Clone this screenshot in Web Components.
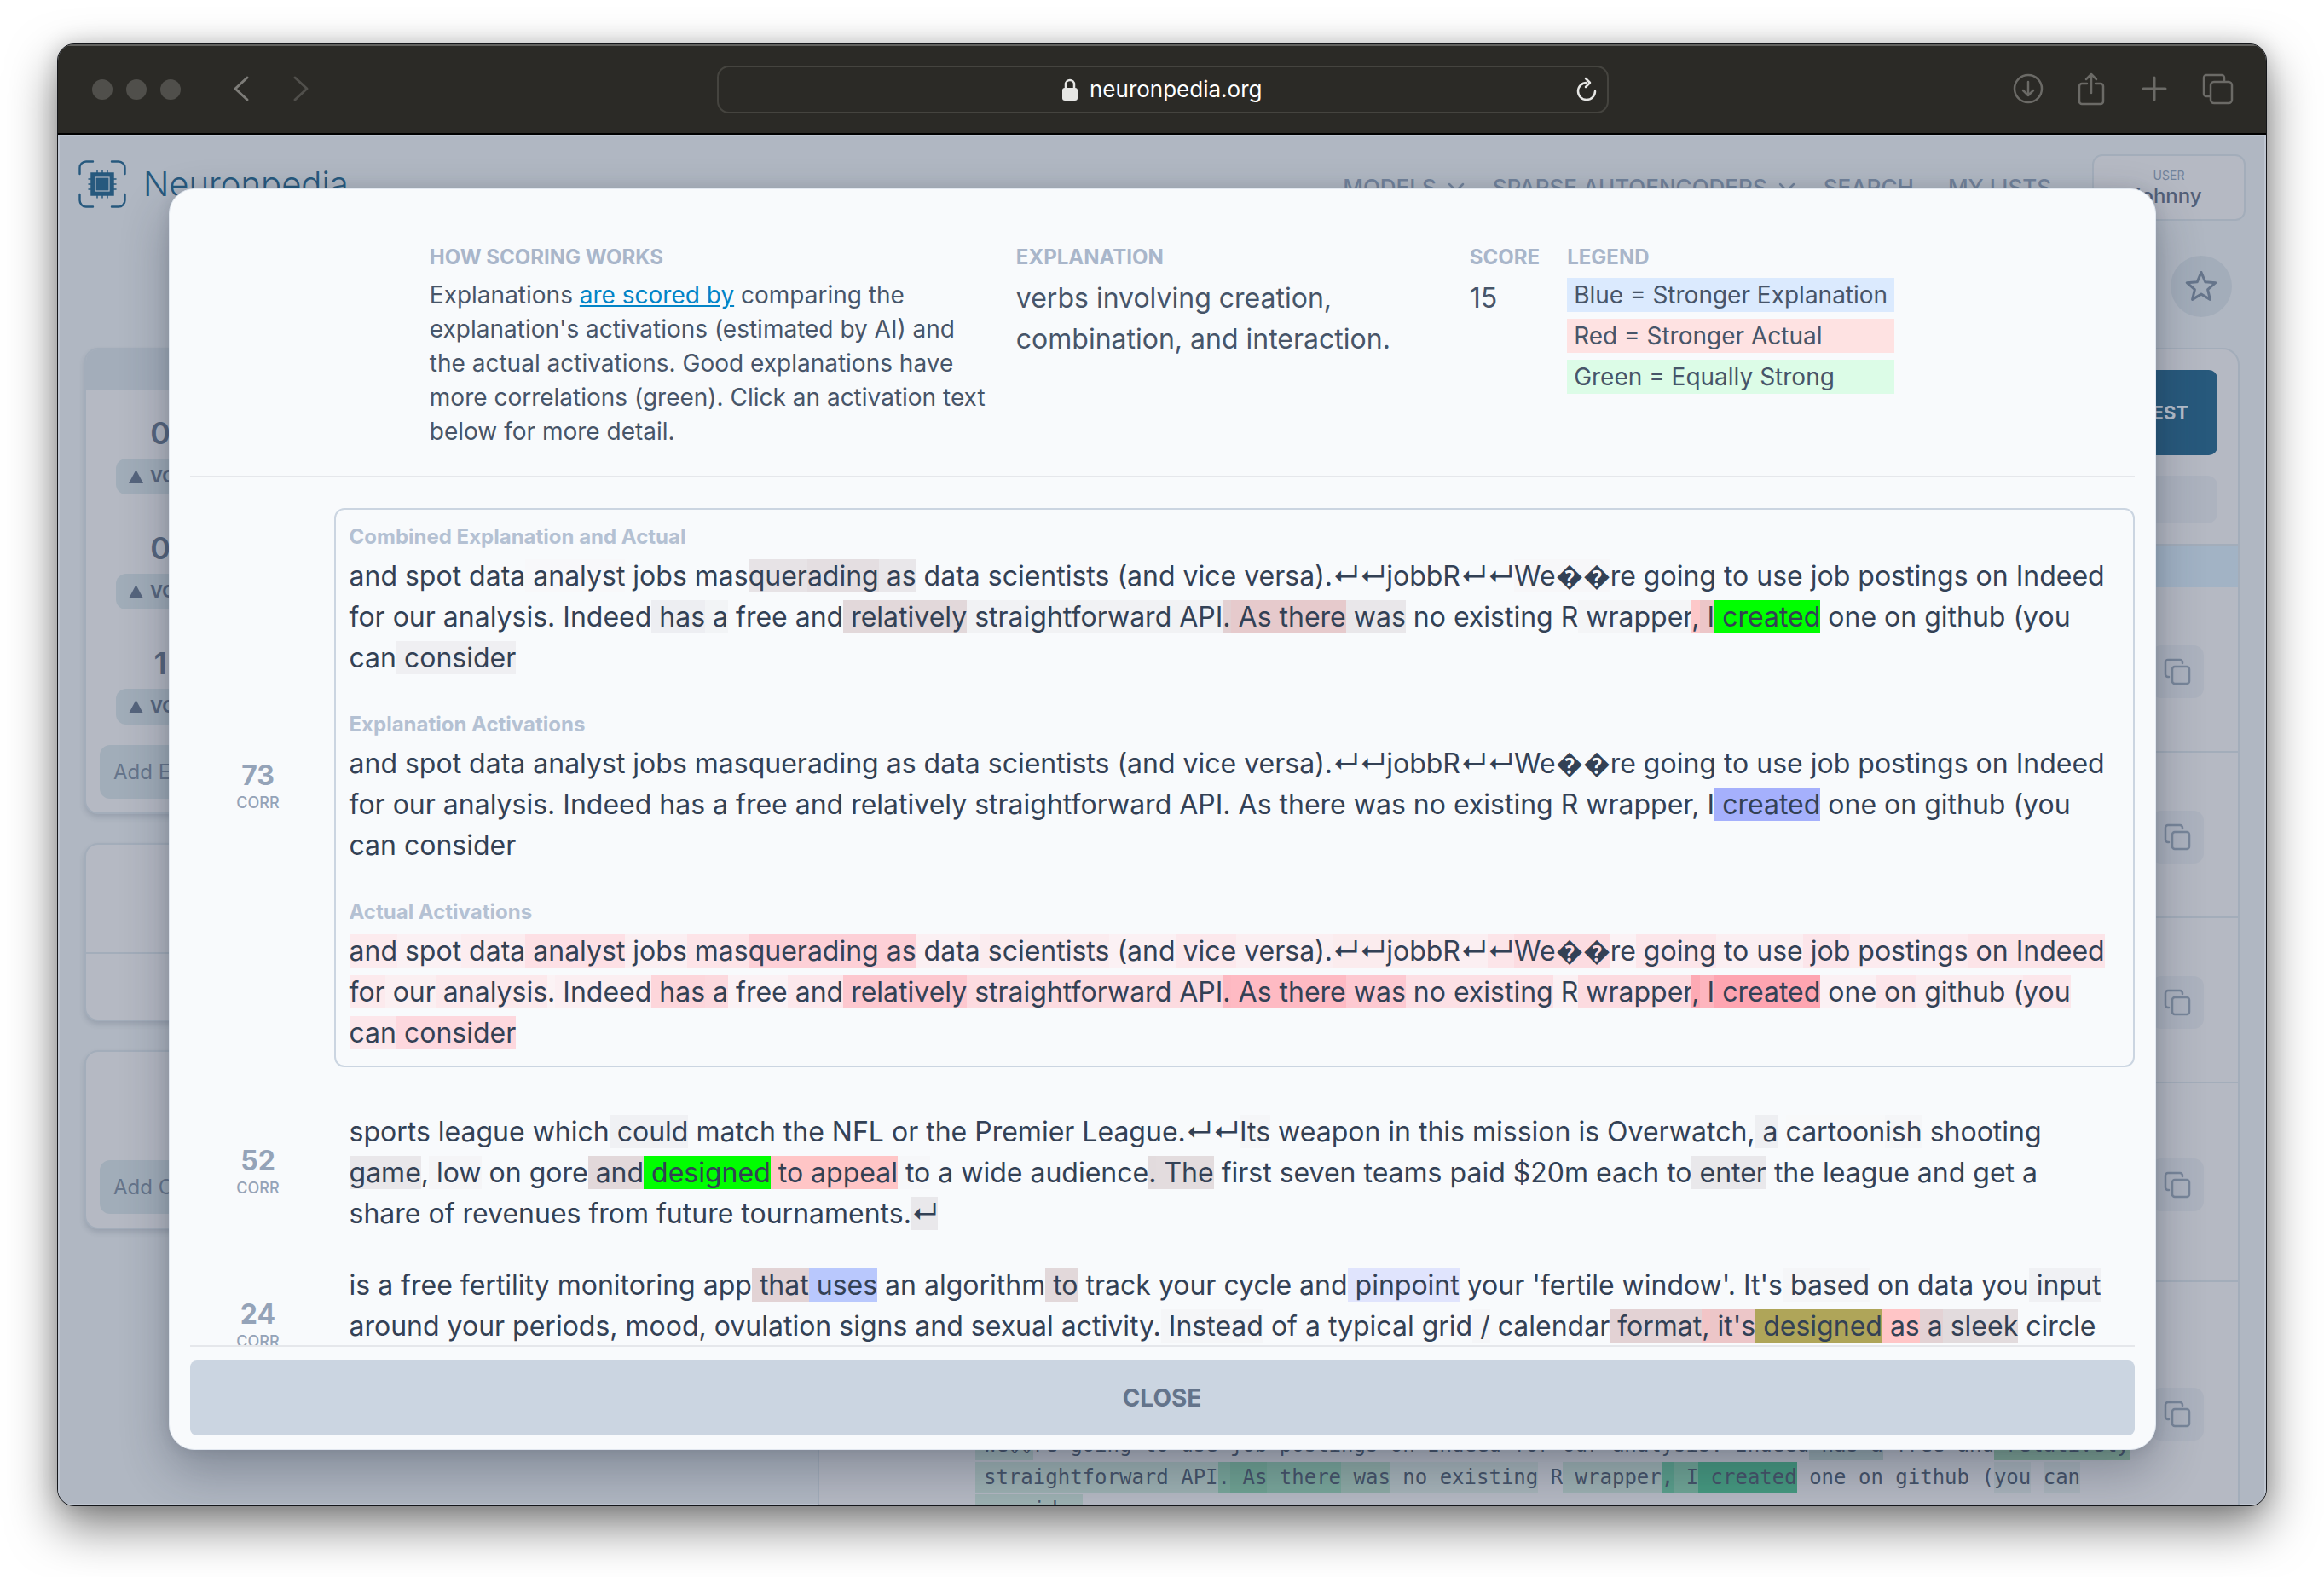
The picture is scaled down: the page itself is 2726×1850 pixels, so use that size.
<!DOCTYPE html>
<html lang="en">
<head>
<meta charset="utf-8">
<title>Neuronpedia</title>
<style>
  html, body { margin: 0; height: 100%; }
  body {
    box-sizing: border-box;
    display: flex;
    padding: 51px 67px 83px;
    background: #fff;
    overflow: hidden;
    font-family: Inter, "Liberation Sans", sans-serif;
    color: #334155;
  }
</style>
</head>
<body>
<browser-window>
  <browser-toolbar slot="toolbar"></browser-toolbar>
  <neuron-page></neuron-page>
  <score-dialog slot="overlay"></score-dialog>
</browser-window>

<script>
const base = `:host, *, *::before, *::after { box-sizing: border-box; } button, input, select { font: inherit; color: inherit; margin: 0; } svg { display: block; flex: none; }`;

function define(name, html, setup) {
  customElements.define(name, class extends HTMLElement {
    connectedCallback() {
      if (this.shadowRoot) return;
      const template = document.createElement('template');
      template.innerHTML = html;
      const root = this.attachShadow({ mode: 'open' });
      root.append(template.content.cloneNode(true));
      if (setup) setup(this, root);
    }
  });
}

define('browser-window', `
<style>${base}
  :host { flex: 1; min-width: 0; display: flex; flex-direction: column; position: relative; border-radius: 20px; overflow: hidden; border: 1px solid #14161a; box-shadow: 0 24px 56px rgba(0,0,0,.5), 0 0 24px rgba(0,0,0,.16); background: #b0b7c2; }
  main { flex: 1; min-height: 0; position: relative; overflow: hidden; box-shadow: inset 0 0 0 2px #bec5d0; }
  .overlay { position: absolute; inset: 0; display: flex; justify-content: center; padding: 63px 0 65px; }
</style>
<slot name="toolbar"></slot>
<main><slot></slot><div class="overlay"><slot name="overlay"></slot></div></main>`);

define('browser-toolbar', `
<style>${base}
  :host { height: 106px; flex: none; display: grid; grid-template-columns: 1fr minmax(0, 1046px) 1fr; align-items: center; padding: 0 38px 0 40px; background: #2b2a26; border-top: 2px solid #62625f; border-bottom: 2px solid #000; color: #6b6a66; }
  .left, .right { display: flex; align-items: center; }
  .lights { display: flex; gap: 16px; margin-right: 56px; }
  .lights i { width: 24px; height: 24px; border-radius: 50%; background: #504f4b; }
  .right { justify-content: flex-end; gap: 36px; }
  button { display: block; padding: 0; border: 0; background: none; }
  .back { margin-right: 40px; color: #7d7c78; }
  .url { height: 56px; border: 2px solid #45443f; border-radius: 14px; display: grid; grid-template-columns: 1fr auto 1fr; align-items: center; padding: 0 10px; color: #fff; }
  label { grid-column: 2; display: flex; align-items: center; gap: 14px; }
  input { width: 204px; padding: 0; border: 0; outline: 0; background: none; font-size: 26px; line-height: 32px; color: #fff; }
  .reload { justify-self: end; }
</style>
<div class="left">
  <div class="lights"><i></i><i></i><i></i></div>
  <button class="back" aria-label="Back"><svg width="30" height="36" viewBox="0 0 30 36" fill="none" stroke="currentColor" stroke-width="3" stroke-linecap="round" stroke-linejoin="round"><path d="M22 4 8 17l14 13"/></svg></button>
  <button aria-label="Forward"><svg width="30" height="36" viewBox="0 0 30 36" fill="none" stroke="#504f4b" stroke-width="3" stroke-linecap="round" stroke-linejoin="round"><path d="M8 4l14 13L8 30"/></svg></button>
</div>
<div class="url">
  <label><svg width="18" height="26" viewBox="0 0 18 26"><rect y="11" width="18" height="15" rx="3" fill="#e6e6e4"/><path d="M4 12V7a5 5 0 0 1 10 0v5" fill="none" stroke="#e6e6e4" stroke-width="2.5"/></svg><input type="text" aria-label="Address" value="neuronpedia.org"></label>
  <button class="reload" aria-label="Reload"><svg width="28" height="30" viewBox="0 0 28 30" fill="none" stroke="#e6e6e4" stroke-width="2.5" stroke-linecap="round" stroke-linejoin="round"><path d="M14 7a10 10 0 1 0 10 10"/><path d="M13 2l5 5-5 5"/></svg></button>
</div>
<div class="right">
  <button aria-label="Downloads"><svg width="38" height="40" viewBox="0 0 38 40" fill="none" stroke="currentColor" stroke-width="2.5" stroke-linecap="round" stroke-linejoin="round"><circle cx="19" cy="19" r="16"/><path d="M19 11v16M13 21l6 6 6-6"/></svg></button>
  <button aria-label="Share"><svg width="38" height="40" viewBox="0 0 38 40" fill="none" stroke="currentColor" stroke-width="2.5" stroke-linecap="round" stroke-linejoin="round"><path d="M14 13H8a3 3 0 0 0-3 3v18a3 3 0 0 0 3 3h22a3 3 0 0 0 3-3V16a3 3 0 0 0-3-3h-6M19 24V2M13 8l6-6 6 6"/></svg></button>
  <button aria-label="New tab"><svg width="38" height="40" viewBox="0 0 38 40" fill="none" stroke="currentColor" stroke-width="3" stroke-linecap="round"><path d="M19 6v26M6 19h26"/></svg></button>
  <button aria-label="Tabs"><svg width="38" height="40" viewBox="0 0 38 40" fill="none" stroke="currentColor" stroke-width="2.5" stroke-linejoin="round"><rect x="11" y="11" width="25" height="25" rx="4"/><path d="M11 28H6a3 3 0 0 1-3-3V6a3 3 0 0 1 3-3h18a3 3 0 0 1 3 3v5"/></svg></button>
</div>`);

define('site-header', `
<style>${base}
  :host { display: flex; align-items: center; justify-content: space-between; padding: 23px 24px 0; height: 100px; }
  a { color: inherit; text-decoration: none; }
  .brand { display: flex; align-items: center; gap: 20px; height: 70px; align-self: flex-start; font-size: 40px; line-height: 48px; font-weight: 300; color: #27597e; }
  nav { display: flex; align-items: center; gap: 40px; font-size: 26px; line-height: 32px; font-weight: 500; color: #71829a; }
  nav a, nav button { display: flex; align-items: center; gap: 12px; padding: 0; border: 0; background: none; }
  nav button { margin-right: -8px; }
  .user { width: 180px; height: 78px; margin-left: 8px; border: 2px solid #a3adba; border-radius: 12px; background: #b5b9c3; display: flex; flex-direction: column; align-items: center; justify-content: center; gap: 0; }
  .user small { font-size: 14px; line-height: 20px; font-weight: 400; color: #71829a; }
  .user span { font-size: 24px; line-height: 28px; font-weight: 500; color: #526079; }
</style>
<a class="brand" href="#"><svg width="56" height="56" viewBox="0 0 56 56" fill="none" stroke="#27597e" stroke-width="2.4" stroke-linecap="round"><path d="M1.500 16V9a7.500 7.500 0 0 1 7.500-7.500h8M39 1.500h8A7.500 7.500 0 0 1 54.500 9v7M54.500 40v7a7.500 7.500 0 0 1-7.500 7.500h-8M17 54.500H9A7.500 7.500 0 0 1 1.500 47v-7"/><rect x="15" y="15" width="26" height="26" fill="#27597e" stroke-width="1.500"/><rect x="20" y="20" width="16" height="16" stroke="#b0b7c2" stroke-width="1.200"/><path stroke-width="1.500" d="M22 12v3M28 12v3M34 12v3M22 41v3M28 41v3M34 41v3M12 22h3M12 28h3M12 34h3M41 22h3M41 28h3M41 34h3"/></svg>Neuronpedia</a>
<nav>
  <button>MODELS <svg width="22" height="14" viewBox="0 0 22 14" fill="none" stroke="currentColor" stroke-width="2.500" stroke-linecap="round"><path d="M3 3l8 8 8-8"/></svg></button>
  <button>SPARSE AUTOENCODERS <svg width="22" height="14" viewBox="0 0 22 14" fill="none" stroke="currentColor" stroke-width="2.500" stroke-linecap="round"><path d="M3 3l8 8 8-8"/></svg></button>
  <a href="#">SEARCH</a>
  <a href="#">MY LISTS</a>
  <a class="user" href="#"><small>USER</small><span>johnny</span></a>
</nav>`);

define('vote-item', `
<style>${base}
  :host { display: flex; flex-direction: column; gap: 8px; width: 104px; align-items: center; }
  b { font-size: 36px; line-height: 44px; font-weight: 600; color: #56657d; }
  button { width: 104px; height: 42px; border: 0; border-radius: 12px; background: #a1adb9; color: #56657d; font-size: 20px; line-height: 24px; font-weight: 700; display: flex; align-items: center; gap: 8px; padding: 0 0 0 15px; }
</style>
<b><slot></slot></b>
<button><svg width="17" height="16" viewBox="0 0 17 16"><path d="M8.500 0 17 16H0z" fill="currentColor"/></svg>VOTE</button>`);

define('side-card', `
<style>${base}
  :host { display: block; border: 2px solid #a3adba; border-radius: 16px; background: #b5b9c3; box-shadow: 0 4px 6px rgba(40,55,75,.16); overflow: hidden; }
</style><slot></slot>`);

define('copy-button', `
<style>${base}
  :host { display: block; }
  button { width: 62px; height: 62px; border: 0; border-radius: 12px; background: #adb3bf; color: #78869a; display: grid; place-items: center; padding: 0; }
</style>
<button aria-label="Copy"><svg width="32" height="32" viewBox="0 0 32 32" fill="none" stroke="currentColor" stroke-width="2.500" stroke-linecap="round" stroke-linejoin="round"><rect x="10" y="10" width="20" height="20" rx="3"/><path d="M6 22H5a3 3 0 0 1-3-3V5a3 3 0 0 1 3-3h14a3 3 0 0 1 3 3v1"/></svg></button>`);

define('neuron-page', `
<style>${base}
  :host { display: block; }
  .tools { display: flex; justify-content: flex-end; padding: 42px 40px 36px; }
  .star { width: 72px; height: 72px; border: 0; border-radius: 50%; background: #a3adba; display: grid; place-items: center; padding: 0; }
  .cols { display: grid; grid-template-columns: 1fr 2fr; gap: 26px; padding: 0 31px; align-items: start; }
  .side { display: flex; flex-direction: column; gap: 34px; }
  .bar { height: 48px; background: #a3adba; }
  .votes { display: flex; flex-direction: column; gap: 41px; padding: 28px 0 24px 35px; }
  .add { display: flex; height: 63px; margin: 0 16px 16px; border: 0; border-radius: 12px; background: #a1adb9; color: #66758b; font-size: 24px; line-height: 32px; align-items: center; padding: 0 16px; width: calc(100% - 32px); }
  .blank { height: 128px; border-bottom: 2px solid #a3adba; }
  .blank + .blank { height: 77px; border: 0; }
  .gap { height: 127px; }
  .panel { border: 2px solid #a3adba; border-radius: 20px; background: #b5b9c3; height: 1500px; overflow: hidden; }
  .top { display: flex; flex-direction: column; align-items: flex-end; gap: 24px; padding: 24px; }
  .test { height: 100px; padding: 0 34px; border: 0; border-radius: 10px; background: #27597c; color: #b5bfcc; font-size: 22px; font-weight: 700; }
  .pill { width: 100%; height: 56px; border-radius: 12px; background: #adb3bf; }
  .band { height: 51px; border-top: 2px solid #a3adba; background: #a2b3c5; }
  .row { display: flex; justify-content: flex-end; align-items: center; padding: 6px 40px 0; height: 194px; border-bottom: 2px solid #a3adba; }
  .tall { height: 233px; }
  .last { height: 320px; border: 0; align-items: flex-start; justify-content: space-between; padding: 0 40px 0 183px; }
  .last copy-button { padding-top: 124px; }
  .last act-text { padding-top: 172px; }
</style>
<site-header></site-header>
<div class="tools"><button class="star" aria-label="Favorite"><svg width="38" height="38" viewBox="0 0 38 38" fill="none" stroke="#66758b" stroke-width="3" stroke-linejoin="round"><path d="M19 2.500l4.700 11.200 12.100 1-9.200 7.900 2.800 11.800L19 28.100 8.600 34.400l2.800-11.800-9.200-7.900 12.100-1z"/></svg></button></div>
<div class="cols">
  <div class="side">
    <side-card>
      <div class="bar"></div>
      <div class="votes"><vote-item>0</vote-item><vote-item>0</vote-item><vote-item>1</vote-item></div>
      <button class="add">Add Explanation</button>
    </side-card>
    <side-card><div class="blank"></div><div class="blank"></div></side-card>
    <side-card><div class="gap"></div><button class="add">Add Comment</button></side-card>
  </div>
  <div class="panel">
    <div class="top"><button class="test">TEST</button><div class="pill"></div></div>
    <div class="band"></div>
    <div class="row"><copy-button></copy-button></div>
    <div class="row"><copy-button></copy-button></div>
    <div class="row"><copy-button></copy-button></div>
    <div class="row tall"><copy-button></copy-button></div>
    <div class="row last"><act-text name="mono" mono></act-text><copy-button></copy-button></div>
  </div>
</div>`);

/* Token runs: [hex: text] is a shaded token, a bare run has no shade, "/" + newline breaks the line. */
const runs = {
  combined: `and spot data[f8f8fa: analyst] jobs mas[e7e3e6:quer][e4dee1:ading][e9e7ea: as] data scientists (and vice versa).↵↵jobbR↵↵[f7f7f9:We��]re going to use job postings on Indeed for our analysis. Indeed[edeef2: has][f2f4f6: a] free and[e2d8da: relatively][f1f2f4: straightforward API][e2d0d2:.][e6cacc: As there][e9e7ea: was] no existing R[f4f5f7: wrapper][fdc8c9:,][ecc6c8: I][00ff00: created] one on github (you can[efeff2: consider]`,
  explanation: `and spot data analyst jobs masquerading as data scientists (and vice versa).↵↵jobbR↵↵We��re going to use job postings on Indeed for our analysis. Indeed has a free and relatively straightforward API. As there was no existing R wrapper, I[a5b0fc: created] one on github (you can consider`,
  actual: `[fcebee:and][fbf1f4: spot][fcedf0: data][fde0e5: analyst][fbeff2: jobs][fde4e8: mas][fdd0d7:querading as][fbf0f3: data][fbecef: scientists][fbf1f4: (and][fce8ec: vice][fbeff2: versa).][fbecee:↵↵jobbR][fbeff2:↵][fce5e9:↵][fcdce1:We��][fbf2f5:re][fce6ea: going][fbeff2: to use][fce5ea: job][fcebef: postings][fce4e8: on Indeed] [fceaed:for][fbf0f2: our][fce9ec: analysis][fbf3f5:.][fbeff2: Indeed][fdd6db: has][fcd9de: a][fbf2f5: free][fce8ec: and][fdc8cf: relatively][fcdbe0: straightforward API][fdb8c1:.][febac3: As there][fdc9d1: was][fce0e5: no existing][fbf0f3: R][fcdbe0: wrapper][fdaab4:,][fdb5be: I][fea5b1: created][fbf1f4: one][fce6ea: on][fbedf0: github (][fce7eb:you] [fce7eb:can][fdd8de: consider]`,
  sports: `sports league which[f0f1f4: could] match the NFL or the Premier League.↵↵[f5f6f8:Its] weapon in this mission is Overwatch,[eeeff2: a] [f8f9fa:cartoon][f5f6f8:ish] shooting [e9e7ea:game],[f5f5f7: low] on gore[e2d8da: and][00ff00: designed][ffc5c6: to appeal][f6f7f9: to] a wide audience[e2dbdd:.][e3dcde: The] first seven teams paid $20m each to[e9e8eb: enter] the league and get a share of revenues from future tournaments.[e9e8eb:↵]`,
  fertility: `is a free fertility monitoring app[e2d3d5: that][b9c8fd: uses] an algorithm[e2d8da: to] track your cycle and[e0e4fd: pinpoint] your 'fertile window'. It's[f5f6f8: based] on data you[f0f1f4: input] around your periods, mood, ovulation signs and sexual activity.[f5f6f8: Instead] of a typical grid[f5f6f8: /] calendar[e3d2d4: format][f2c5c7:,][ecc6c8: it's][afa559: designed][ffc5c6: as][e3d2d4: a][e2dbdd: sleek] circle`,
  mono: `[9db1b2:We��]re going to use job postings on Indeed for our analysis. Indeed[98aaaf: has a] free and[7ea494: relatively]/
[9db1b2:straightforward API][79a69a:.][6fa292: As][79a69a: there][8eaaa5: was][a7b4b9: no existing] R[9db1b2: wrapper][5a9f8b:,][6fa595: I][45997f: created] one on github ([a9b3bb:you] [a9b3bb:can]/
[9db1b2:consider]`
};

define('act-text', `
<style>${base}
  :host { display: block; font-size: 32px; line-height: 48px; color: #334155; }
  :host([mono]) { font-family: "DejaVu Sans Mono", monospace; font-size: 24px; line-height: 38px; color: #455369; white-space: nowrap; }
  :host([mono]) span { padding: 4px 0; }
  :host([mono]) .first { padding-left: 10px; }
</style>`, (host, root) => {
  runs[host.getAttribute('name')].split('/\n').forEach((line) => {
    const box = document.createElement('div');
    line.split(/\[([0-9a-f]{6}:[^\]]*)\]/).forEach((part, i) => {
      if (!part) return;
      if (i % 2 === 0) return box.append(part);
      const token = document.createElement('span');
      token.textContent = part.slice(7);
      token.style.background = '#' + part.slice(0, 6);
      if (!box.childNodes.length) token.className = 'first';
      box.append(token);
    });
    root.append(box);
  });
});

define('corr-row', `
<style>${base}
  :host { display: grid; grid-template-columns: 160px minmax(0, 1fr); column-gap: 9px; align-items: center; }
  .corr { display: flex; flex-direction: column; align-items: center; gap: 4px; color: #94a3b8; }
  b { font-size: 32px; line-height: 32px; font-weight: 700; }
  small { font-size: 18px; line-height: 24px; font-weight: 500; }
  .text { min-height: 180px; border: 2px solid transparent; border-radius: 12px; padding: 16px 24px 14px 16px; display: flex; flex-direction: column; gap: 38px; }
  :host([selected]) { margin-bottom: 34px; }
  :host([selected]) .text { border-color: #cbd5e1; }
</style>
<div class="corr"><b></b><small>CORR</small></div>
<div class="text"><slot></slot></div>`, (host, root) => {
  root.querySelector('b').textContent = host.getAttribute('score');
});

define('labelled-text', `
<style>${base}
  :host { display: flex; flex-direction: column; gap: 6px; }
  h3 { margin: 0; font-size: 24px; line-height: 32px; font-weight: 700; color: #b4c1d3; }
</style><h3></h3><slot></slot>`, (host, root) => {
  root.querySelector('h3').textContent = host.getAttribute('label');
});

define('info-column', `
<style>${base}
  :host { display: flex; flex-direction: column; gap: 8px; color: #475569; }
  h2 { margin: 0; font-size: 24px; line-height: 32px; font-weight: 700; color: #a9b6ca; }
</style><h2></h2><slot></slot>`, (host, root) => {
  root.querySelector('h2').textContent = host.getAttribute('label');
});

define('score-dialog', `
<style>${base}
  :host { display: flex; flex-direction: column; width: 90%; padding: 0 24px 16px; border: 1px solid #e2e8f0; border-radius: 30px; background: #f8fafc; box-shadow: 0 24px 56px rgba(30,41,59,.32), 0 0 16px rgba(30,41,59,.12); overflow: hidden; }
  header { display: grid; grid-template-columns: 656px 500px auto auto; gap: 32px; justify-content: center; padding: 64px 0 32px; border-bottom: 2px solid #e5e7eb; }
  p { margin: 0; }
  .small { font-size: 28px; line-height: 40px; }
  .big { font-size: 32px; line-height: 48px; max-width: 460px; }
  a { color: #0284c7; }
  ul { list-style: none; margin: 0; padding: 0; display: flex; flex-direction: column; gap: 8px; font-size: 28px; line-height: 40px; }
  li { padding: 0 8px; }
  .blue { background: #dbeafe; } .red { background: #fee2e2; } .green { background: #dcfce7; }
  .list { flex: 1; min-height: 0; overflow: hidden; padding-top: 36px; border-bottom: 2px solid #e5e7eb; }
  .close { flex: none; margin-top: 16px; height: 88px; border: 0; border-radius: 8px; background: #cbd5e1; color: #64748b; font-size: 28px; line-height: 40px; font-weight: 700; }
</style>
<header>
  <info-column label="HOW SCORING WORKS"><p class="small">Explanations <a href="#">are scored by</a> comparing the explanation's activations (estimated by AI) and the actual activations. Good explanations have more correlations (green). Click an activation text below for more detail.</p></info-column>
  <info-column label="EXPLANATION"><p class="big">verbs involving creation, combination, and interaction.</p></info-column>
  <info-column label="SCORE"><p class="big">15</p></info-column>
  <info-column label="LEGEND"><ul><li class="blue">Blue = Stronger Explanation</li><li class="red">Red = Stronger Actual</li><li class="green">Green = Equally Strong</li></ul></info-column>
</header>
<div class="list">
  <corr-row score="73" selected>
    <labelled-text label="Combined Explanation and Actual"><act-text name="combined"></act-text></labelled-text>
    <labelled-text label="Explanation Activations"><act-text name="explanation"></act-text></labelled-text>
    <labelled-text label="Actual Activations"><act-text name="actual"></act-text></labelled-text>
  </corr-row>
  <corr-row score="52"><act-text name="sports"></act-text></corr-row>
  <corr-row score="24"><act-text name="fertility"></act-text></corr-row>
</div>
<button class="close">CLOSE</button>`);
</script>
</body>
</html>
